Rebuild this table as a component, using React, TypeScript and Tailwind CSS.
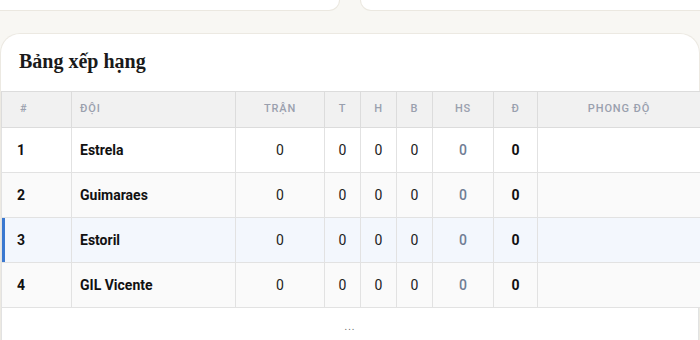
import React from 'react';

const teams = [
  { rank: 1, name: 'Estrela' },
  { rank: 2, name: 'Guimaraes' },
  { rank: 3, name: 'Estoril' },
  { rank: 4, name: 'GIL Vicente' },
];

const th =
  'h-[36px] border border-[#dcdcdc] bg-[#f1f1f1] text-[11px] font-medium uppercase tracking-[0.08em] text-[#9aa0ae]';
const td = 'h-[45px] border border-[#e2e2e2] text-[14px]';

export default function App() {
  return (
    <div
      className="min-h-[340px] overflow-hidden bg-[#f8f7f3]"
      style={{ fontFamily: 'Roboto, "Noto Sans", sans-serif' }}
    >
      {/* Top cards (scrolled away) */}
      <div className="-ml-4 flex h-[11px] gap-5">
        <div className="w-[356px] rounded-b-2xl border border-t-0 border-[#ebe8e0] bg-white" />
        <div className="-mr-4 flex-1 rounded-b-2xl border border-t-0 border-[#ebe8e0] bg-white" />
      </div>

      {/* Standings card */}
      <div className="mt-[22px] rounded-t-[20px] border border-b-0 border-[#ece9e2] bg-white">
        <h2
          className="mb-[16px] px-[18px] pt-[13px] text-[20px] font-bold leading-[28px] text-[#1a1a1a]"
          style={{ fontFamily: '"Liberation Serif", "DejaVu Serif", serif' }}
        >
          Bảng xếp hạng
        </h2>

        <table className="w-[699px] table-fixed border-collapse">
          <colgroup>
            <col className="w-[70px]" />
            <col className="w-[164px]" />
            <col className="w-[89px]" />
            <col className="w-[36px]" />
            <col className="w-[36px]" />
            <col className="w-[36px]" />
            <col className="w-[61px]" />
            <col className="w-[44px]" />
            <col className="w-[163px]" />
          </colgroup>
          <thead>
            <tr>
              <th className={`${th} pl-[18px] text-left`}>#</th>
              <th className={`${th} pl-[8px] text-left`}>Đội</th>
              <th className={`${th} text-center`}>Trận</th>
              <th className={`${th} text-center`}>T</th>
              <th className={`${th} text-center`}>H</th>
              <th className={`${th} text-center`}>B</th>
              <th className={`${th} text-center`}>HS</th>
              <th className={`${th} text-center`}>Đ</th>
              <th className={`${th} text-center`}>Phong độ</th>
            </tr>
          </thead>
          <tbody>
            {teams.map((t) => {
              const rowBg =
                t.rank === 3 ? 'bg-[#f3f7fd]' : t.rank % 2 === 0 ? 'bg-[#fafafa]' : 'bg-white';
              return (
                <tr key={t.rank} className={rowBg}>
                  <td
                    className={`${td} pl-[15px] font-bold text-[#111] ${
                      t.rank === 3 ? 'shadow-[inset_3px_0_0_#3a78d0]' : ''
                    }`}
                  >
                    {t.rank}
                  </td>
                  <td className={`${td} pl-[8px] text-[13.5px] font-bold text-[#111]`}>{t.name}</td>
                  <td className={`${td} text-center text-[#222]`}>0</td>
                  <td className={`${td} text-center text-[#222]`}>0</td>
                  <td className={`${td} text-center text-[#222]`}>0</td>
                  <td className={`${td} text-center text-[#222]`}>0</td>
                  <td className={`${td} text-center font-medium text-[#6f7d94]`}>0</td>
                  <td className={`${td} text-center font-bold text-[#111]`}>0</td>
                  <td className={td} />
                </tr>
              );
            })}
          </tbody>
        </table>

        <div className="flex h-[36px] items-center justify-center border-x border-[#e2e2e2] text-[10px] tracking-widest text-[#666]">
          ...
        </div>
      </div>
    </div>
  );
}
